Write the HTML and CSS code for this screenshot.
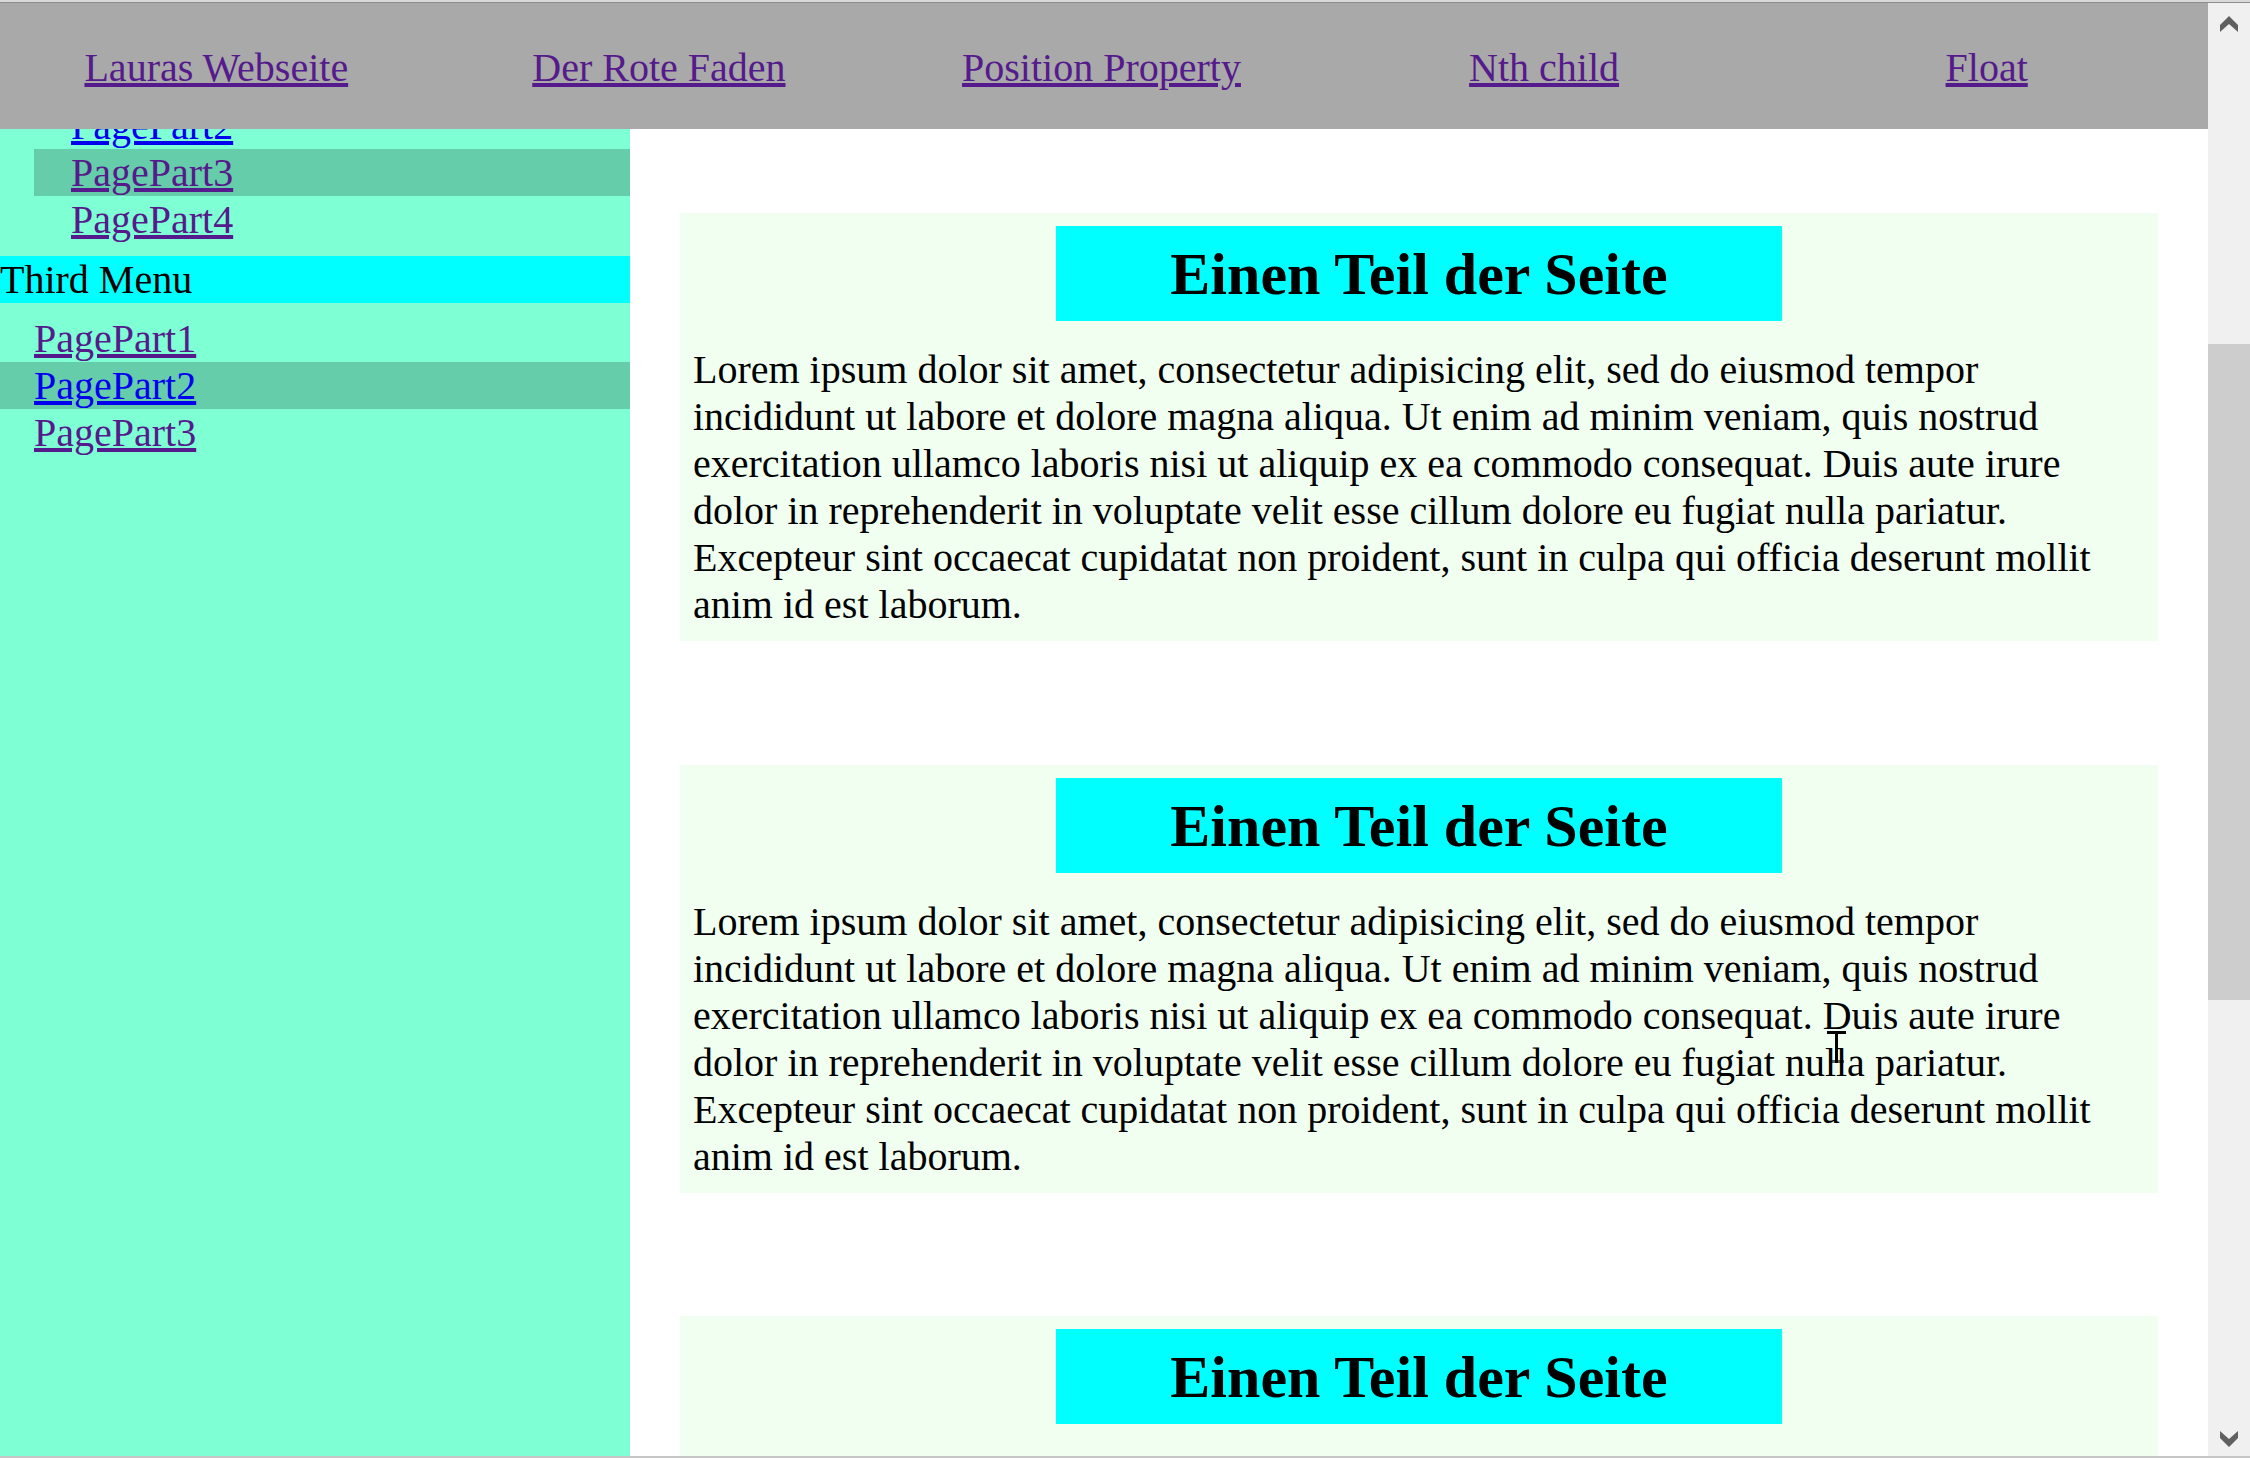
FILE: index.html
```html
<!DOCTYPE html>
<html lang="de">
<head>
<meta charset="utf-8">
<title>Lauras Webseite</title>
<link rel="stylesheet" href="styles.css">
</head>
<body>
<div class="window">
  <div class="frame-top"></div>
  <div class="browser">
    <div class="viewport">
      <nav class="topnav">
        <ul class="topnav-list">
          <li class="topnav-item"><a class="link visited" href="#">Lauras Webseite</a></li>
          <li class="topnav-item"><a class="link visited" href="#">Der Rote Faden</a></li>
          <li class="topnav-item"><a class="link visited" href="#">Position Property</a></li>
          <li class="topnav-item"><a class="link visited" href="#">Nth child</a></li>
          <li class="topnav-item"><a class="link visited" href="#">Float</a></li>
        </ul>
      </nav>
      <div class="layout">
        <aside class="sidebar">
          <ul class="menu">
            <li class="menu-group">
              <ul class="submenu">
                <li class="submenu-item"><a class="link unvisited" href="#">PagePart2</a></li>
                <li class="submenu-item active"><a class="link visited" href="#">PagePart3</a></li>
                <li class="submenu-item"><a class="link visited" href="#">PagePart4</a></li>
              </ul>
            </li>
            <li class="menu-group">
              <div class="menu-title">Third Menu</div>
              <ul class="items">
                <li class="item"><a class="link visited" href="#">PagePart1</a></li>
                <li class="item active"><a class="link unvisited" href="#">PagePart2</a></li>
                <li class="item"><a class="link visited" href="#">PagePart3</a></li>
              </ul>
            </li>
          </ul>
        </aside>
        <main class="content">
          <section class="part">
            <h2 class="part-title">Einen Teil der Seite</h2>
            <p class="part-text">Lorem ipsum dolor sit amet, consectetur adipisicing elit, sed do eiusmod tempor incididunt ut labore et dolore magna aliqua. Ut enim ad minim veniam, quis nostrud exercitation ullamco laboris nisi ut aliquip ex ea commodo consequat. Duis aute irure dolor in reprehenderit in voluptate velit esse cillum dolore eu fugiat nulla pariatur. Excepteur sint occaecat cupidatat non proident, sunt in culpa qui officia deserunt mollit anim id est laborum.</p>
          </section>
          <section class="part">
            <h2 class="part-title">Einen Teil der Seite</h2>
            <p class="part-text">Lorem ipsum dolor sit amet, consectetur adipisicing elit, sed do eiusmod tempor incididunt ut labore et dolore magna aliqua. Ut enim ad minim veniam, quis nostrud exercitation ullamco laboris nisi ut aliquip ex ea commodo consequat. Duis aute irure dolor in reprehenderit in voluptate velit esse cillum dolore eu fugiat nulla pariatur. Excepteur sint occaecat cupidatat non proident, sunt in culpa qui officia deserunt mollit anim id est laborum.</p>
          </section>
          <section class="part">
            <h2 class="part-title">Einen Teil der Seite</h2>
            <p class="part-text part-text-below">Lorem ipsum dolor sit amet, consectetur adipisicing elit, sed do eiusmod tempor incididunt ut labore et dolore magna aliqua.</p>
          </section>
        </main>
      </div>
      <svg class="cursor" width="20" height="34" viewBox="0 0 20 34" aria-hidden="true">
        <rect x="0" y="0" width="19" height="3" fill="#000"/>
        <rect x="8" y="0" width="3" height="32" fill="#000"/>
        <rect x="2" y="29" width="15" height="3" fill="#000" opacity="0.6"/>
      </svg>
    </div>
    <div class="scrollbar">
      <div class="sb-button">
        <svg width="18" height="16" viewBox="0 0 18 16"><polygon points="9,0 18,9 18,16 9,8 0,16 0,9" fill="#606060"/></svg>
      </div>
      <div class="sb-track">
        <div class="sb-thumb"></div>
      </div>
      <div class="sb-button sb-button-down">
        <svg width="18" height="16" viewBox="0 0 18 16"><polygon points="9,16 18,7 18,0 9,8 0,0 0,7" fill="#606060"/></svg>
      </div>
    </div>
  </div>
  <div class="frame-bottom"></div>
</div>
</body>
</html>
```

FILE: styles.css
```css
html, body {
  margin: 0;
  padding: 0;
}

body {
  width: 2250px;
  height: 1458px;
  overflow: hidden;
  background: #ffffff;
  font-family: "Liberation Serif", "Times New Roman", serif;
  font-size: 40px;
  color: #000;
}

.window {
  display: flex;
  flex-direction: column;
  height: 1458px;
}

.frame-top {
  height: 2px;
  background: #d9d9d9;
  border-bottom: 1px solid #8e8e8e;
}

.frame-bottom {
  height: 2px;
  background: #c6c6c6;
}

.browser {
  flex: 1;
  display: flex;
  min-height: 0;
}

.viewport {
  flex: 1;
  position: relative;
  overflow: hidden;
  background: #ffffff;
}

/* top navigation (fixed bar overlaying the page) */
.topnav {
  position: absolute;
  top: 0;
  left: 0;
  right: 0;
  height: 126px;
  padding-top: 2px;
  box-sizing: border-box;
  background: #a9a9a9;
  z-index: 2;
  display: flex;
  align-items: center;
}

.topnav-list {
  list-style: none;
  margin: 0 0 0 -5px;
  padding: 0;
  display: flex;
  width: calc(100% + 5px);
}

.topnav-item {
  flex: 1;
  text-align: center;
  line-height: 47px;
}

.link {
  text-decoration: underline;
}

.visited {
  color: #551a8b;
}

.unvisited {
  color: #0000ee;
}

/* page layout */
.layout {
  display: flex;
  height: 100%;
}

.sidebar {
  width: 630px;
  flex: none;
  background: #7fffd4;
  padding-top: 99px;
}

.menu,
.submenu,
.items {
  list-style: none;
  margin: 0;
  padding: 0;
}

.submenu {
  margin-left: 34px;
  margin-bottom: 13px;
}

.submenu-item {
  padding-left: 37px;
  line-height: 47px;
}

.menu-title {
  background: #00ffff;
  line-height: 47px;
}

.items {
  margin-top: 12px;
}

.item {
  padding-left: 34px;
  line-height: 47px;
}

.active {
  background: #66cdaa;
}

.content {
  flex: 1;
  padding: 210px 50px 0;
}

.part {
  background: #f0fff0;
  padding: 13px;
  margin-bottom: 123.5px;
}

.part-title {
  width: 50%;
  margin: 0 auto;
  padding: 14px 0 12px;
  background: #00ffff;
  text-align: center;
  font-size: 60px;
  font-weight: bold;
  line-height: 69px;
}

.part-text {
  margin: 25px 0 0;
  line-height: 47px;
}

.part-text-below {
  margin-top: 28px;
}

.cursor {
  position: absolute;
  left: 1827px;
  top: 1028px;
  z-index: 3;
}

/* window scrollbar */
.scrollbar {
  width: 42px;
  flex: none;
  background: #f0f0f0;
  display: flex;
  flex-direction: column;
}

.sb-button {
  height: 42px;
  flex: none;
  display: flex;
  justify-content: center;
  padding-top: 13px;
  box-sizing: border-box;
}

.sb-button-down {
  padding-top: 0;
  align-items: flex-end;
  padding-bottom: 9px;
}

.sb-track {
  flex: 1;
  padding-top: 299px;
}

.sb-thumb {
  height: 656px;
  background: #cdcdcd;
}
```
